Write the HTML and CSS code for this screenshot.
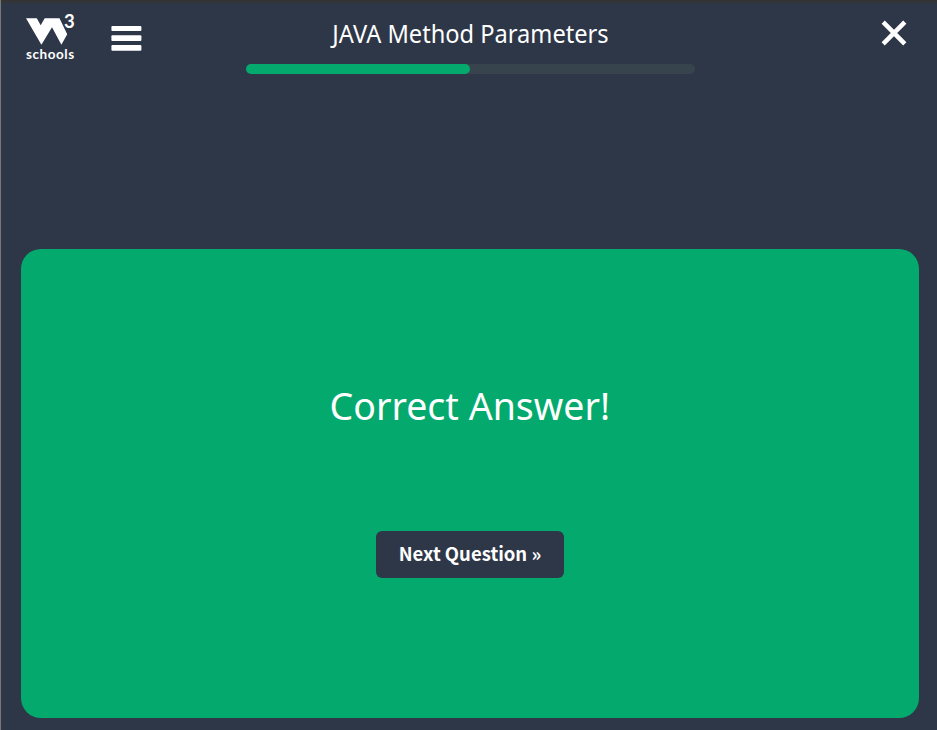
FILE: index.html
```html
<!DOCTYPE html>
<html lang="en">
<head>
<meta charset="utf-8">
<title>JAVA Method Parameters</title>
<link rel="stylesheet" href="styles.css">
</head>
<body>
<header class="header">
  <div class="left">
    <a class="logo">
      <svg class="mark" width="42" height="27" viewBox="0 0 42 27"><path d="M0 .3H10.8L14.7 7.2 18.7.3H33.5L41.2 16.2 35.4 26.7 26 9.2 15.4 26.7Z"/></svg>
      <span class="three">3</span>
      <span class="schools">schools</span>
    </a>
    <svg class="menu" width="31" height="25" viewBox="0 0 31 25"><rect x=".4" width="30" height="5" rx="1"/><rect x=".4" y="9.3" width="30" height="5.7" rx="1"/><rect x=".4" y="19" width="30" height="5.7" rx="1"/></svg>
  </div>
  <div class="center">
    <h1 class="title">JAVA Method Parameters</h1>
    <div class="track"><div class="fill"></div></div>
  </div>
  <svg class="close" width="26" height="26" viewBox="0 0 26 26"><path d="M2.2 2.2 23.8 23.8M23.8 2.2 2.2 23.8"/></svg>
</header>
<main class="card">
  <h2 class="result">Correct Answer!</h2>
  <button class="next">Next Question »</button>
</main>
</body>
</html>
```
FILE: styles.css
```css
* { box-sizing: border-box; }
body {
  margin: 0;
  width: 937px;
  height: 730px;
  overflow: hidden;
  background: #2e3748;
  border-left: 1px solid #777;
  color: #fff;
  font-family: "Noto Sans", sans-serif;
}
.header {
  height: 249px;
  border-top: 3px solid #333435;
  display: grid;
  grid-template-columns: 245px 449px 1fr;
  align-items: start;
}
.left { display: flex; }
.logo {
  position: relative;
  width: 49px;
  height: 50px;
  margin: 15px 0 0 25px;
  display: flex;
  flex-direction: column;
}
.mark, .menu { display: block; fill: #fff; }
.three {
  position: absolute;
  left: 38px;
  top: -9px;
  font: 700 18.5px/24px Lato, sans-serif;
}
.schools {
  font: 700 13.5px/16px Lato, sans-serif;
  letter-spacing: .55px;
  margin-top: 1px;
}
.menu { margin: 23px 0 0 36px; }
.title {
  margin: 14px 0 0;
  font-size: 25px;
  line-height: 32px;
  font-weight: 400;
  text-align: center;
  white-space: nowrap;
  transform: scaleX(.945);
}
.track {
  margin-top: 15px;
  height: 10px;
  border-radius: 5px;
  background: #38444d;
}
.fill {
  width: 224px;
  height: 10px;
  border-radius: 5px;
  background: #04aa6d;
}
.close {
  justify-self: end;
  margin: 17px 30px 0 0;
  stroke: #fff;
  stroke-width: 4.5;
}
.card {
  width: 898px;
  height: 469px;
  margin-left: 20px;
  border-radius: 20px;
  background: #04aa6d;
  display: flex;
  flex-direction: column;
  align-items: center;
}
.result {
  margin: 129px 0 0;
  font-size: 39px;
  line-height: 54px;
  font-weight: 400;
  white-space: nowrap;
  transform: scaleX(.962);
}
.next {
  width: 188px;
  height: 47px;
  margin-top: 99px;
  padding: 0 0 3px;
  border: 0;
  border-radius: 6px;
  background: #2e3748;
  color: #fff;
  font: 700 18.5px/44px "Noto Sans CJK SC", sans-serif;
  white-space: nowrap;
}
```
